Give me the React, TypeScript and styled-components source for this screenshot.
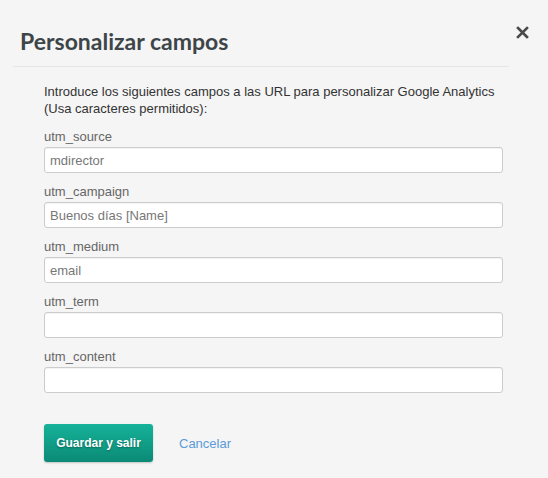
import styled, { createGlobalStyle } from 'styled-components'

const GlobalStyle = createGlobalStyle`
  html, body {
    margin: 0;
    padding: 0;
    background: #f5f5f5;
  }
  * {
    box-sizing: border-box;
  }
`

const fields = [
  { name: 'utm_source', value: 'mdirector' },
  { name: 'utm_campaign', value: 'Buenos días [Name]' },
  { name: 'utm_medium', value: 'email' },
  { name: 'utm_term', value: '' },
  { name: 'utm_content', value: '' },
]

export default function App() {
  return (
    <>
      <GlobalStyle />
      <Modal>
        <Header>
          <Title>Personalizar campos</Title>
          <CloseButton aria-label="Cerrar">
            <svg width="13" height="13" viewBox="0 0 13 13">
              <path d="M2 2 L11 11 M11 2 L2 11" stroke="#4a4a4a" strokeWidth="2.6" strokeLinecap="square" />
            </svg>
          </CloseButton>
        </Header>
        <Divider />
        <Body>
          <Intro>
            Introduce los siguientes campos a las URL para personalizar Google Analytics
            <br />
            (Usa caracteres permitidos):
          </Intro>
          {fields.map((f) => (
            <Field key={f.name}>
              <Label>{f.name}</Label>
              <Input type="text" defaultValue={f.value} />
            </Field>
          ))}
          <Actions>
            <SaveButton>Guardar y salir</SaveButton>
            <CancelLink href="#">Cancelar</CancelLink>
          </Actions>
        </Body>
      </Modal>
    </>
  )
}

const Modal = styled.div`
  width: 548px;
  height: 478px;
  background: #f5f5f5;
  font-family: 'Liberation Sans', Arial, sans-serif;
`

const Header = styled.div`
  display: flex;
  align-items: flex-start;
  justify-content: space-between;
  padding: 26px 19px 0 20px;
  height: 66px;
`

const Title = styled.h2`
  margin: 2px 0 0;
  font-family: Lato, 'Open Sans', sans-serif;
  font-size: 23px;
  font-weight: 700;
  color: #3d4548;
  line-height: 26px;
`

const CloseButton = styled.button`
  border: none;
  background: none;
  padding: 0;
  cursor: pointer;
  line-height: 0;
`

const Divider = styled.hr`
  margin: 0 0 0 13px;
  width: 496px;
  border: none;
  border-top: 1px solid #e6e6e6;
`

const Body = styled.div`
  padding: 16px 0 0 44px;
  width: 503px;
`

const Intro = styled.p`
  margin: 0 0 11px;
  font-size: 13px;
  line-height: 17px;
  color: #333;
`

const Field = styled.div`
  display: flex;
  flex-direction: column;
  margin-bottom: 10px;
`

const Label = styled.label`
  font-size: 13px;
  line-height: 17px;
  color: #666;
  margin-bottom: 2px;
`

const Input = styled.input`
  width: 459px;
  height: 26px;
  border: 1px solid #ccc;
  border-radius: 3px;
  background: #fff;
  padding: 0 5px;
  font-family: 'Liberation Sans', Arial, sans-serif;
  font-size: 13px;
  color: #777;
  box-shadow: inset 0 1px 1px rgba(0, 0, 0, 0.05);

  &:focus {
    outline: none;
    border-color: #17a88f;
  }
`

const Actions = styled.div`
  display: flex;
  align-items: center;
  gap: 26px;
  margin-top: 31px;
`

const SaveButton = styled.button`
  width: 109px;
  height: 38px;
  border: none;
  border-radius: 3px;
  background: linear-gradient(to bottom, #16b299, #0b8a76);
  color: #fff;
  font-family: 'Liberation Sans', Arial, sans-serif;
  font-size: 12px;
  font-weight: 700;
  text-shadow: 0 1px 2px rgba(0, 0, 0, 0.35);
  box-shadow: 0 1px 2px rgba(0, 0, 0, 0.2);
  cursor: pointer;
`

const CancelLink = styled.a`
  font-size: 13px;
  color: #5a9bd8;
  text-decoration: none;
`
